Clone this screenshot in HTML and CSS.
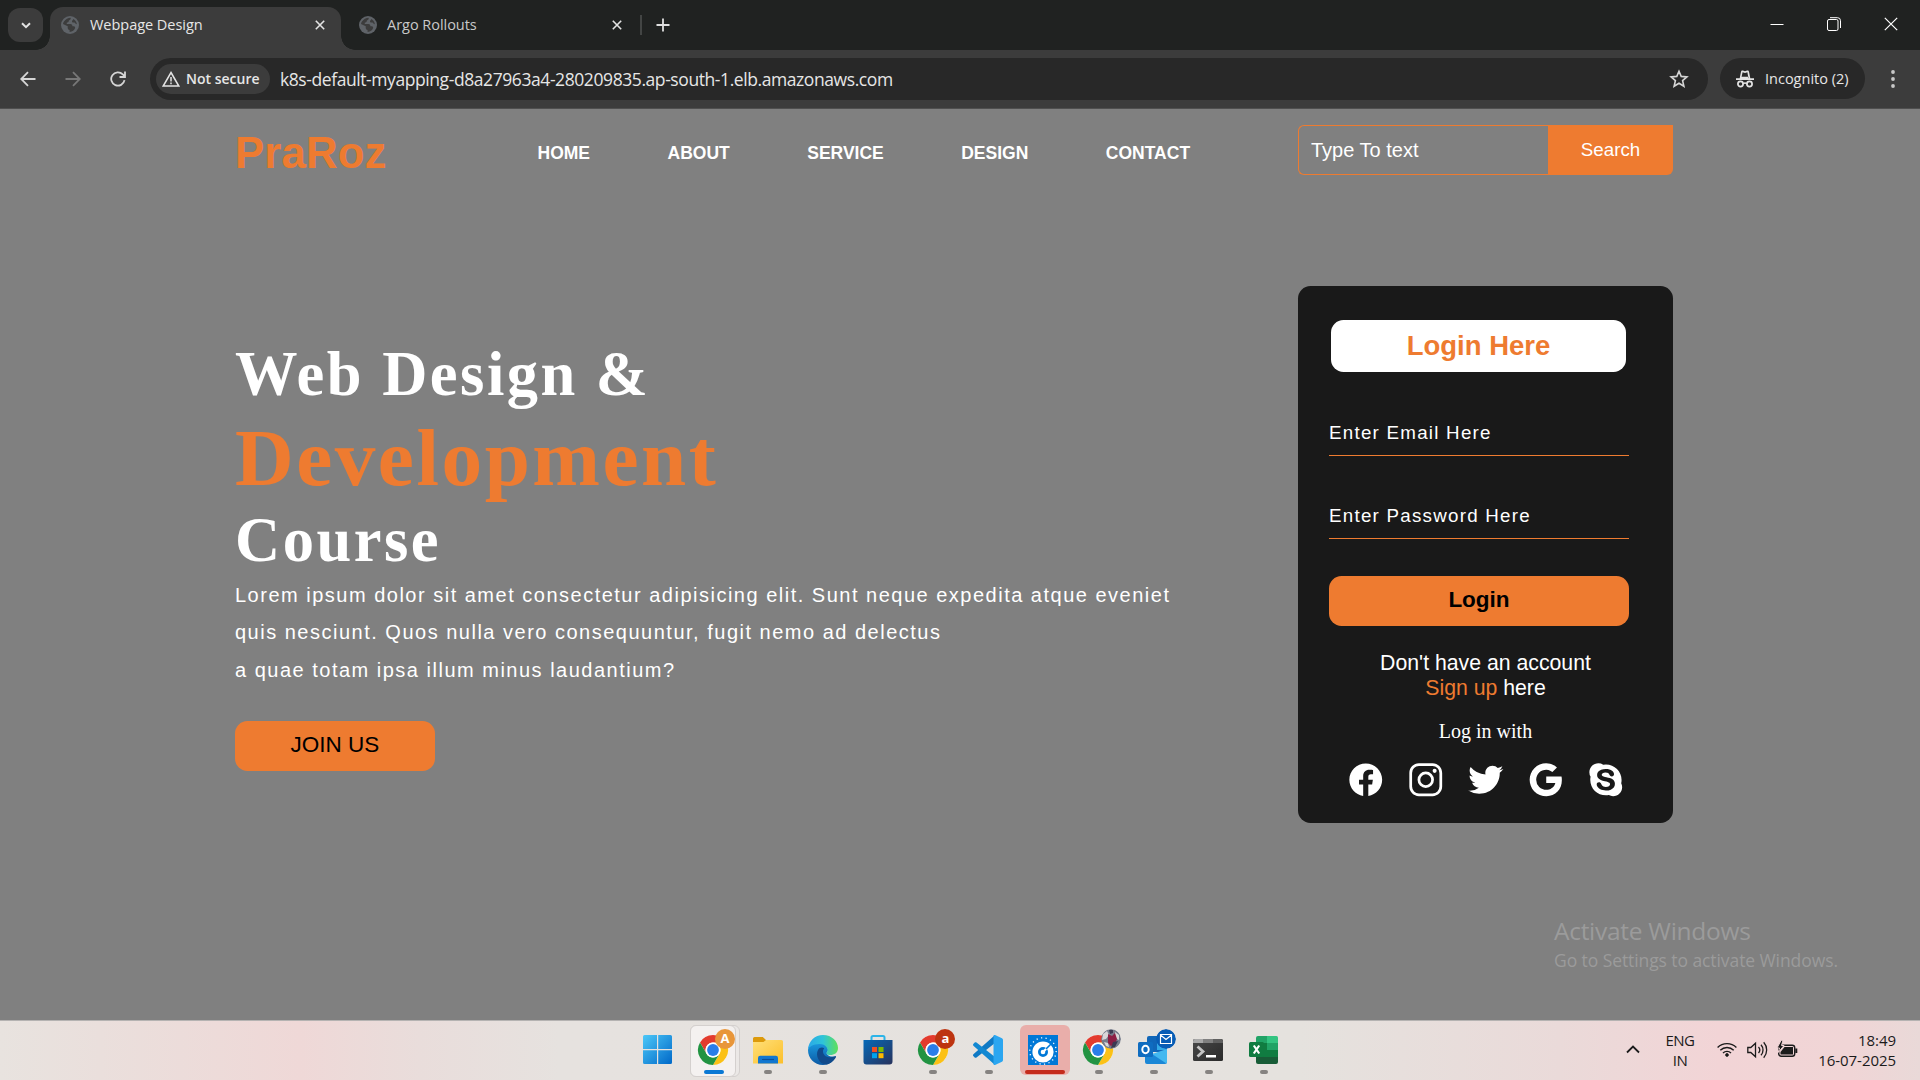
FILE: index.html
```html
<!DOCTYPE html>
<html lang="en">
<head>
<meta charset="utf-8">
<title>Webpage Design</title>
<link rel="stylesheet" href="styles.css">
</head>
<body>
<svg class="defs" width="0" height="0" aria-hidden="true">
  <defs>
    <linearGradient id="win" x1="0" y1="0" x2="1" y2="1"><stop offset="0" stop-color="#4cc8f8"/><stop offset="1" stop-color="#0068c8"/></linearGradient>
    <linearGradient id="fold" x1="0" y1="0" x2="1" y2="1"><stop offset="0" stop-color="#ffe07a"/><stop offset="1" stop-color="#fcbf2a"/></linearGradient>
    <linearGradient id="edgeA" x1="0" y1="0" x2="1" y2="0"><stop offset="0" stop-color="#2aa8e8"/><stop offset=".5" stop-color="#2fc4d8"/><stop offset="1" stop-color="#5fe05a"/></linearGradient>
    <linearGradient id="edgeB" x1="0" y1="0" x2="0" y2="1"><stop offset="0" stop-color="#1b9de2"/><stop offset="1" stop-color="#0c59a4"/></linearGradient>
    <linearGradient id="store" x1="0" y1="0" x2="1" y2="1"><stop offset="0" stop-color="#0669b8"/><stop offset="1" stop-color="#28325c"/></linearGradient>
    <linearGradient id="term" x1="0" y1="0" x2="1" y2="1"><stop offset="0" stop-color="#484848"/><stop offset="1" stop-color="#2a2a2a"/></linearGradient>
    <symbol id="globe" viewBox="0 0 18 18">
      <circle cx="9" cy="9" r="9" fill="#5f6368"/>
      <path class="land" d="M3 5.5C4.600 3 7 1.700 9.600 1.700c.5 1.500-.6 2.300-1.700 2.800C7.800 5.900 7 6.500 5.900 6.500L5.700 8.100H9.500c1.400 0 1.900 1 1.900 2.100h1.500c.9 0 1.300.8 1.200 1.700-.7 2-2.600 3.800-5.500 4.100v-2.100c-1.300-.1-1.900-.9-1.900-2.100v-1.500L2 7.900c.1-.9.500-1.700 1-2.400zM12 3c2 .9 3.600 2.900 3.900 5.200-1.300-.1-1.800-.9-2.300-1.700h-2c-.7-.5-.8-1.500-.3-2 .5-.5.900-.8.700-1.500z"/>
    </symbol>
    <symbol id="close" viewBox="0 0 10 10"><path d="M.8.8l8.400 8.400M9.200.8L.8 9.200" fill="none" stroke="currentColor" stroke-width="1.600"/></symbol>
    <symbol id="chrome" viewBox="0 0 32 32">
      <circle cx="16" cy="16" r="15" fill="#fff"/>
      <path fill="#e33b2e" d="M3 8.500A15 15 0 0 1 29 8.500H16a7.500 7.500 0 0 0-6.500 11.200z"/>
      <path fill="#fbc116" d="M29 8.500A15 15 0 0 1 16 31l6.500-11.250A7.500 7.500 0 0 0 16 8.500z"/>
      <path fill="#229342" d="M16 31A15 15 0 0 1 3 8.500l6.500 11.250a7.500 7.500 0 0 0 13 0z"/>
      <circle cx="16" cy="16" r="7.500" fill="#fff"/>
      <circle cx="16" cy="16" r="5.900" fill="#2a7de9"/>
    </symbol>
  </defs>
</svg>

<div class="tabstrip">
  <div class="tabsearch"><svg width="10" height="7" viewBox="0 0 10 7"><path d="M1 1.200l4 4 4-4" fill="none" stroke="#e3e3e3" stroke-width="2"/></svg></div>
  <div class="tab tab-active">
    <svg class="globe" width="18" height="18"><use href="#globe"/></svg>
    <span class="tab-title">Webpage Design</span>
    <svg class="x" width="10" height="10"><use href="#close"/></svg>
  </div>
  <div class="tab tab-idle">
    <svg class="globe" width="18" height="18"><use href="#globe"/></svg>
    <span class="tab-title">Argo Rollouts</span>
    <svg class="x" width="10" height="10"><use href="#close"/></svg>
  </div>
  <div class="tab-sep"></div>
  <svg class="newtab" width="14" height="14" viewBox="0 0 14 14"><path d="M7 .5v13M.5 7h13" stroke="#dfdfdf" stroke-width="1.800"/></svg>
  <div class="winctl">
    <svg width="14" height="14" viewBox="0 0 14 14"><path d="M.5 7.500h13" stroke="#fff" stroke-width="1"/></svg>
    <svg width="14" height="14" viewBox="0 0 14 14" fill="none" stroke="#fff"><rect x=".5" y="2.500" width="10.500" height="11" rx="1.500"/><path d="M3 .7h7.500a3 3 0 0 1 3 3V11"/></svg>
    <svg width="14" height="14" viewBox="0 0 14 14"><path d="M.8.800l12.400 12.400M13.200.800L.8 13.200" stroke="#fff" stroke-width="1.200"/></svg>
  </div>
</div>

<div class="toolbar">
  <svg class="nav-ico" width="16" height="16" viewBox="0 0 16 16"><path d="M15.500 8H1.500M8 1.200L1.200 8 8 14.800" fill="none" stroke="#d5d5d5" stroke-width="1.800"/></svg>
  <svg class="nav-ico" width="16" height="16" viewBox="0 0 16 16"><path d="M.5 8h14M8 1.200L14.800 8 8 14.800" fill="none" stroke="#777" stroke-width="1.800"/></svg>
  <svg class="nav-ico" width="16" height="16" viewBox="0 0 16 16"><path d="M14.500 9.200A6.700 6.700 0 1 1 12.800 3.400L14.500 5.200M15 .5V6H9.500" fill="none" stroke="#d5d5d5" stroke-width="1.800"/></svg>
  <div class="omnibox">
    <div class="chip">
      <svg width="18" height="16" viewBox="0 0 18 16"><path d="M9 1.500L16.800 15H1.200z" fill="none" stroke="#e3e3e3" stroke-width="1.500"/><path d="M9 6v4.500M9 11.500v1.700" stroke="#e3e3e3" stroke-width="1.500"/></svg>
      <span>Not secure</span>
    </div>
    <span class="url">k8s-default-myapping-d8a27963a4-280209835.ap-south-1.elb.amazonaws.com</span>
    <svg class="star" width="20" height="20" viewBox="0 0 20 20"><path d="M10 2.200l2.200 5.200 5.700.5-4.300 3.700 1.300 5.600L10 14.200l-4.900 3 1.300-5.600L2.100 7.900l5.700-.5z" fill="none" stroke="#d5d5d5" stroke-width="1.600"/></svg>
  </div>
  <div class="incognito">
    <svg width="18" height="18" viewBox="0 0 18 18"><path fill="#e3e3e3" fill-rule="evenodd" d="M0 8.200h18v1.700H0zM3.700 8.200L5 1.800C5.200.8 6 .3 6.900.6L9 1.200l2.100-.6c.9-.3 1.700.2 1.900 1.200l1.300 6.400h-1.900L11.400 2.300 9 3 6.600 2.300 5.600 6.800h7v1.400z"/><g fill="none" stroke="#e3e3e3" stroke-width="1.700"><circle cx="4.500" cy="14" r="2.600"/><circle cx="13.500" cy="14" r="2.600"/><path d="M7 13.500q2-1 4 0"/></g></svg>
    <span>Incognito (2)</span>
  </div>
  <svg class="kebab" width="4" height="18" viewBox="0 0 4 18" fill="#c8c8c8"><circle cx="2" cy="2" r="1.900"/><circle cx="2" cy="9" r="1.900"/><circle cx="2" cy="16" r="1.900"/></svg>
</div>

<main class="page">
  <header class="header">
    <div class="logo">PraRoz</div>
    <nav class="menu"><a>HOME</a><a>ABOUT</a><a>SERVICE</a><a>DESIGN</a><a>CONTACT</a></nav>
    <div class="search"><div class="search-input">Type To text</div><div class="search-btn">Search</div></div>
  </header>
  <section class="hero">
    <div class="copy">
      <h1><span class="line-a">Web Design &amp;</span><span class="line-b">Development</span><span class="line-c">Course</span></h1>
      <p class="par">Lorem ipsum dolor sit amet consectetur adipisicing elit. Sunt neque expedita atque eveniet<br>quis nesciunt. Quos nulla vero consequuntur, fugit nemo ad delectus<br>a quae totam ipsa illum minus laudantium?</p>
      <div class="join">JOIN US</div>
    </div>
    <div class="card">
      <h2>Login Here</h2>
      <div class="field">Enter Email Here</div>
      <div class="field field-next">Enter Password Here</div>
      <div class="login">Login</div>
      <p class="signup">Don't have an account<br><a>Sign up</a> here</p>
      <p class="with">Log in with</p>
      <div class="social">
        <svg viewBox="0 0 512 512"><path d="M480 257.350c0-123.700-100.300-224-224-224s-224 100.300-224 224c0 111.800 81.900 204.470 189 221.290V322.120h-56.890v-64.770H221V208c0-56.130 33.450-87.160 84.610-87.160 24.510 0 50.150 4.380 50.150 4.380v55.130H327.500c-27.810 0-36.510 17.260-36.510 35v42h62.120l-9.920 64.770H291v156.540c107.100-16.810 189-109.480 189-221.310z"/></svg>
        <svg viewBox="0 0 512 512"><path d="M349.330 69.330a93.620 93.620 0 0 1 93.340 93.340v186.660a93.620 93.620 0 0 1-93.340 93.340H162.670a93.620 93.620 0 0 1-93.340-93.340V162.670a93.620 93.620 0 0 1 93.340-93.340h186.660m0-37.330H162.670C90.800 32 32 90.800 32 162.670v186.660C32 421.200 90.800 480 162.670 480h186.660C421.200 480 480 421.200 480 349.330V162.670C480 90.800 421.200 32 349.330 32z"/><path d="M377.330 162.670a28 28 0 1 1 28-28 27.940 27.940 0 0 1-28 28zM256 181.330A74.670 74.670 0 1 1 181.330 256 74.750 74.750 0 0 1 256 181.330m0-37.330a112 112 0 1 0 112 112 112 112 0 0 0-112-112z"/></svg>
        <svg viewBox="0 0 512 512"><path d="M496 109.500a201.800 201.800 0 0 1-56.550 15.300 97.510 97.510 0 0 0 43.330-53.600 197.740 197.740 0 0 1-62.560 23.500A99.140 99.140 0 0 0 348.310 64c-54.420 0-98.460 43.400-98.460 96.900a93.210 93.210 0 0 0 2.540 22.100 280.700 280.700 0 0 1-203-101.300A95.690 95.690 0 0 0 36 130.400c0 33.600 17.530 63.300 44 80.700A97.500 97.500 0 0 1 35.220 199v1.200c0 47 34 86.100 79 95a100.760 100.760 0 0 1-25.940 3.400 94.380 94.380 0 0 1-18.510-1.800c12.510 38.500 48.920 66.500 92.050 67.300A199.590 199.590 0 0 1 39.500 405.600a203 203 0 0 1-23.500-1.400A278.680 278.680 0 0 0 166.740 448c181.360 0 280.440-147.700 280.440-275.800 0-4.200-.11-8.400-.31-12.500A198.480 198.480 0 0 0 496 109.500z"/></svg>
        <svg viewBox="0 0 512 512"><path d="M473.160 221.480l-2.260-9.590H262.460v88.220H387c-12.930 61.400-72.930 93.720-121.940 93.720-35.660 0-73.250-15-98.130-39.110a140.080 140.080 0 0 1-41.800-98.880c0-37.160 16.700-74.330 41-98.780s61-38.130 97.490-38.130c41.790 0 71.740 22.190 82.940 32.310l62.690-62.360C390.860 72.720 340.340 32 261.600 32c-60.750 0-119 23.270-161.080 65.710C58 139.500 36.250 199.930 36.250 256s20.580 113.480 61.300 155.600c43.510 44.920 105.130 68.400 168.580 68.400 57.730 0 112.450-22.620 151.450-63.660 38.340-40.400 58.170-96.300 58.170-154.900 0-24.670-2.480-39.320-2.590-39.960z"/></svg>
        <svg viewBox="0 0 512 512"><path fill-rule="evenodd" d="M467.160 303.600a205.690 205.690 0 0 0 4.900-45.150c0-116.320-95.690-210.700-213.790-210.700a221.460 221.460 0 0 0-36.540 3A123.580 123.580 0 0 0 155.930 32C87.550 32 32 86.720 32 154.150A119.560 119.560 0 0 0 49 216a211.160 211.160 0 0 0-4.320 42.350c0 116.440 95.690 210.700 213.670 210.700a214 214 0 0 0 39.090-3.500A125.450 125.450 0 0 0 356.070 480C424.570 480 480 425.280 480 357.970a118.470 118.470 0 0 0-12.840-54.370zM368 359c-9.920 13.760-24.510 24.730-43.410 32.430S283.360 403 257.690 403c-30.690 0-56.360-5.370-76.550-15.870a101 101 0 0 1-35.240-30.800c-9.110-12.830-13.660-25.660-13.660-38 0-7.700 3-14.350 8.870-19.950 5.840-5.370 13.420-8.170 22.290-8.170 7.350 0 13.650 2.100 18.790 6.420 4.900 4.080 9.100 10.150 12.480 18.080A108.090 108.090 0 0 0 207 336.150q6.320 8.220 17.860 13.650c7.820 3.620 18.200 5.480 31 5.480 17.620 0 32.090-3.730 42.940-11.080 10.740-7.120 15.880-15.750 15.880-26.250 0-8.280-2.690-14.820-8.290-19.950-5.830-5.370-13.420-9.570-22.870-12.370-9.690-3-22.870-6.180-39.210-9.560-22.170-4.670-41-10.270-56-16.570-15.280-6.420-27.650-15.400-36.760-26.480-9.220-11.320-13.770-25.550-13.770-42.240a67.860 67.860 0 0 1 14.470-42.580c9.570-12.250 23.460-21.820 41.550-28.350 17.740-6.530 38.860-9.800 62.660-9.800 19.140 0 35.830 2.220 49.830 6.420s25.910 10.150 35.360 17.380 16.340 14.930 20.770 23 6.650 16.220 6.650 24c0 7.460-2.920 14.350-8.760 20.300a29.650 29.650 0 0 1-21.940 9.100c-7.930 0-14.120-1.870-18.430-5.600-4-3.500-8.170-8.870-12.720-16.690-5.370-9.910-11.790-17.730-19.140-23.100-7.240-5.140-19.260-7.940-36.060-7.940-15.520 0-28.120 3-37.460 8.980-9 5.720-13.420 12.370-13.420 20.180a18.440 18.440 0 0 0 4.090 12.130 37.900 37.900 0 0 0 12.370 9.450 90.400 90.400 0 0 0 17.150 6.530c6 1.640 15.870 4.090 29.530 7.120 17.380 3.620 33.250 7.820 47.260 12.130 14.240 4.550 26.490 10 36.520 16.450a72.930 72.930 0 0 1 24.160 25.090c5.720 10 8.640 22.510 8.640 37.090A75.090 75.090 0 0 1 368 359z"/></svg>
      </div>
    </div>
  </section>
  <div class="activate"><div class="act-a">Activate Windows</div><div class="act-b">Go to Settings to activate Windows.</div></div>
</main>

<footer class="taskbar">
  <div class="apps">
    <div class="app"><svg width="30" height="30" viewBox="0 0 30 30" fill="url(#win)"><path d="M0 1.500A1.500 1.500 0 0 1 1.500 0H14v14H0zM15.200 0h12.300A1.500 1.500 0 0 1 29 1.500V14H15.200zM0 15.200h14V29H1.500A1.500 1.500 0 0 1 0 27.500zM15.200 15.200H29v12.300a1.500 1.500 0 0 1-1.500 1.500H15.200z"/></svg></div>
    <div class="app app-open"><svg width="32" height="32"><use href="#chrome"/></svg><b class="badge badge-a">A</b><i class="run run-wide"></i></div>
    <div class="app"><svg width="30" height="30" viewBox="0 0 30 30"><path fill="#dc9a0c" d="M0 3.500A1.500 1.500 0 0 1 1.500 2h8.300L13 5v4H0z"/><path fill="url(#fold)" d="M0 7h10.500l2.500-2h15.500A1.500 1.500 0 0 1 30 6.500V28.500H0z"/><path fill="#1277d0" d="M5 28.500V23a2.200 2.200 0 0 1 2.200-2.200h15.600A2.200 2.200 0 0 1 25 23v5.500z"/><path d="M9 24.500h12" stroke="#0a4f9a" stroke-width="1.200"/></svg><i class="run"></i></div>
    <div class="app"><svg width="30" height="30" viewBox="0 0 30 30"><path fill="url(#edgeB)" d="M0 15C1 7 8 6 12 7c5 1 8 4 8 8 0 2-2 2-1 4 2 3 6 3 9 2-2 5-7 9-13 9C6 30 0 23 0 15z"/><path fill="url(#edgeA)" d="M0 14.500C.5 6 7 0 15 0c9 0 15 6.500 15 13 0 5-4 7-7.500 7-4 0-4.500-1.500-3.500-3 2-3-1-8-7.500-8C5 9 1 12 0 14.500z"/><path fill="#114a8b" d="M10 15c-3 5 1 15 9 14.500 4-1 7.500-4.500 9-7.500.3-.7-.2-1-.8-.7-5 2.200-12 1-12.200-4.800 0-1.500.5-2.500 1.200-3.300C14 12 11.500 12.500 10 15z"/></svg><i class="run"></i></div>
    <div class="app"><svg width="30" height="32" viewBox="0 0 30 32"><path d="M8.500 7V3.500A1.500 1.500 0 0 1 10 2h10a1.500 1.500 0 0 1 1.500 1.500V7" fill="none" stroke="#2cb4e8" stroke-width="2"/><path fill="url(#store)" d="M.5 6h29v21.500a3 3 0 0 1-3 3h-23a3 3 0 0 1-3-3z"/><path fill="#f25022" d="M9 13h5v5H9z"/><path fill="#7fba00" d="M15.500 13h5v5h-5z"/><path fill="#00a4ef" d="M9 19.200h5v5H9z"/><path fill="#ffb900" d="M15.500 19.200h5v5h-5z"/></svg></div>
    <div class="app"><svg width="32" height="32"><use href="#chrome"/></svg><b class="badge badge-r">a</b><i class="run"></i></div>
    <div class="app"><svg width="30" height="30" viewBox="0 0 30 30"><path fill="#0f79c4" d="M22 0v8L3.500 22.500c-.6.500-1.300.4-1.800-.1l-1.400-1.400c-.4-.5-.4-1.200.1-1.700z"/><path fill="#1288d2" d="M22 30v-8L3.500 7.500c-.6-.5-1.300-.4-1.800.1L.3 9c-.4.500-.4 1.200.1 1.700z"/><path fill="#2ba6f0" d="M22 0l7 3.300c.6.300 1 .9 1 1.600v20.200c0 .7-.4 1.300-1 1.600L22 30c-.8.200-1.500-.2-1.500-1V1c0-.8.700-1.200 1.500-1z"/></svg><i class="run"></i></div>
    <div class="app app-alert"><svg width="30" height="30" viewBox="0 0 30 30"><path fill="#0078d7" d="M0 0h30v30H0z"/><circle cx="15" cy="16" r="13.200" fill="none" stroke="#fff" stroke-width="1.300" stroke-dasharray="1.200 3.400"/><circle cx="15" cy="17" r="7.800" fill="none" stroke="#fff" stroke-width="5.600"/><circle cx="15" cy="17" r="2.300" fill="#fff"/><path d="M15 17L20 12" stroke="#fff" stroke-width="2.200"/><path d="M18 14L24.500 7.500" stroke="#0078d7" stroke-width="1.600"/></svg><i class="run run-red"></i></div>
    <div class="app"><svg width="32" height="32"><use href="#chrome"/></svg><svg class="badge" viewBox="0 0 20 20"><circle cx="10" cy="10" r="10" fill="#777d8c"/><path fill="#d9d6d8" d="M2 5l4-3 2 4-3 4-4 1zM14 3l4 3v5l-4-2zM3 13l4 1 1 4-3-1z"/><path fill="#8c1f45" d="M7 5l4 2 3-3 2 6-2 5-4 2-3-3z"/><path fill="#3b3a52" d="M12 13l5-1-3 6-4 1zM8 1h4v3l-3 1z"/></svg><i class="run"></i></div>
    <div class="app"><svg width="30" height="30" viewBox="0 0 30 30"><path fill="#1066b8" d="M9 3a2 2 0 0 1 2-2h16a2 2 0 0 1 2 2v14H9z"/><path fill="#32a9e7" d="M19 5h10v10H19z"/><path fill="#1b87d6" d="M7 15l11 5 11-6v13a2 2 0 0 1-2 2H9a2 2 0 0 1-2-2z"/><path fill="#43b8f0" d="M29 14v13a2 2 0 0 1-.6 1.400L14 19z"/><rect y="7" width="15" height="15" rx="1.500" fill="#0f6cc0"/><ellipse cx="7.500" cy="14.500" rx="3.200" ry="3.800" fill="none" stroke="#fff" stroke-width="2"/></svg><svg class="badge" viewBox="0 0 20 20"><circle cx="10" cy="10" r="10" fill="#075cb5"/><path d="M4.500 5.500h11v9h-11zM4.500 6l5.500 4.500L15.500 6" fill="none" stroke="#fff" stroke-width="1.200"/></svg><i class="run"></i></div>
    <div class="app"><svg width="30" height="22" viewBox="0 0 30 22"><rect width="30" height="22" rx="1.500" fill="url(#term)"/><path fill="#a8a8a8" d="M1.500 0H10v4H0V1.500z"/><path fill="#808080" d="M10 0h10v4H10z"/><path fill="#606060" d="M20 0h8.500L30 1.500V4H20z"/><path d="M4.500 7.500l5.500 5-5.500 5" fill="none" stroke="#c4c4c4" stroke-width="2.800"/><path fill="#fff" d="M13 16h10v2.500H13z"/></svg><i class="run"></i></div>
    <div class="app"><svg width="30" height="30" viewBox="0 0 30 30"><path fill="#21a366" d="M7 3a2 2 0 0 1 2-2h9v7H7z"/><path fill="#33c481" d="M18 1h9.500A1.500 1.500 0 0 1 29 2.500V8H18z"/><path fill="#107c41" d="M7 8h11v14H7zM18 15h11v7H18z"/><path fill="#21a366" d="M18 8h11v7H18z"/><path fill="#185c37" d="M7 22h22v5a2 2 0 0 1-2 2H9a2 2 0 0 1-2-2z"/><rect y="7" width="15" height="15" rx="1.500" fill="#107c41"/><path d="M4.800 10.500l5.400 8M10.200 10.500l-5.400 8" stroke="#fff" stroke-width="2.200"/></svg><i class="run"></i></div>
  </div>
  <div class="tray">
    <svg width="14" height="9" viewBox="0 0 14 9"><path d="M1 7.500L7 1.500l6 6" fill="none" stroke="#1b1b1b" stroke-width="1.800"/></svg>
    <div class="lang">ENG<br>IN</div>
    <svg class="wifi" width="20" height="15" viewBox="0 0 20 15" fill="none" stroke="#1b1b1b" stroke-width="1.400"><path d="M.6 5.500a13.300 13.300 0 0 1 18.800 0M3.300 8.300a9.500 9.500 0 0 1 13.400 0M6 11a5.700 5.700 0 0 1 8 0"/><circle cx="10" cy="13" r="1.400" fill="#1b1b1b" stroke-width=".8"/></svg>
    <svg class="vol" width="21" height="18" viewBox="0 0 21 18" fill="none" stroke="#1b1b1b" stroke-width="1.300"><path d="M.8 6.500h3L8.500 2.200v13.600L3.800 11.500h-3z"/><path d="M11.500 6a4.500 4.500 0 0 1 0 6M14 3.700a8 8 0 0 1 0 10.600M16.700 1.300a11.500 11.500 0 0 1 0 15.400"/></svg>
    <svg class="bat" width="21" height="18" viewBox="0 0 21 18"><rect x="1.700" y="5.200" width="16" height="11" rx="2.500" fill="none" stroke="#1b1b1b" stroke-width="1.400"/><path d="M19.300 8.500v4.500" stroke="#1b1b1b" stroke-width="2"/><path fill="#1b1b1b" d="M7.500 7H16v7.500H3.500V12z"/><path fill="#1b1b1b" stroke="#f1d4d6" stroke-width="1" d="M4.200.3L0 8h2.500L1.200 12.500 7 5.500H4.500L6 .3z"/></svg>
    <div class="clock">18:49<br>16-07-2025</div>
  </div>
</footer>
</body>
</html>
```
FILE: styles.css
```css
* { box-sizing: border-box; margin: 0; padding: 0; }
body {
  width: 1920px;
  height: 1080px;
  overflow: hidden;
  display: flex;
  flex-direction: column;
  background: #808080;
  font-family: "Liberation Sans", Arial, sans-serif;
}
svg { display: block; flex: none; }
.defs { position: absolute; }

/* browser window */
.tabstrip, .toolbar, .activate, .taskbar { font-family: "Open Sans", "Noto Sans", sans-serif; }
.tabstrip {
  height: 50px;
  flex: none;
  display: flex;
  background: #202221;
  padding-left: 8px;
}
.tabsearch {
  width: 35px;
  height: 34px;
  margin: 8px 7px 0 0;
  border-radius: 12px;
  background: #3c3c3c;
  display: flex;
  align-items: center;
  justify-content: center;
}
.tab {
  height: 43px;
  margin-top: 7px;
  display: flex;
  align-items: center;
  color: #e6e6e6;
  font-size: 14.5px;
  letter-spacing: -0.03px;
  position: relative;
  white-space: nowrap;
  padding-bottom: 7px;
}
.tab .globe { margin-top: -1px; }
.tab .x { margin-left: auto; margin-top: 0; color: #e3e3e3; }
.tab-title { margin-left: 11px; line-height: 20px; }
.tab-active {
  width: 291px;
  background: #3c3c3c;
  border-radius: 13px 13px 0 0;
  padding: 0 16px 7px 11px;
}
.land { fill: #3c3c3c; }
.tab-active::before, .tab-active::after {
  content: "";
  position: absolute;
  bottom: 0;
  width: 14px;
  height: 14px;
}
.tab-active::before { left: -14px; background: radial-gradient(circle at 0 0, transparent 13.5px, #3c3c3c 14px); }
.tab-active::after { right: -14px; background: radial-gradient(circle at 100% 0, transparent 13.5px, #3c3c3c 14px); }
.tab-idle { width: 299px; padding: 0 18px 7px 18px; color: #c9c9c9; }
.tab-idle .tab-title { margin-left: 10px; }
.tab-sep { width: 2px; height: 20px; margin-top: 15px; background: #434544; }
.newtab { margin: 18px 0 0 14px; }
.winctl { margin: 17px 22px 0 auto; display: flex; gap: 43px; }

.toolbar {
  height: 59px;
  flex: none;
  display: flex;
  align-items: flex-start;
  background: linear-gradient(#3c3c3c 0 0) 0 0 / 100% 58px no-repeat, #4f4f4f;
  padding: 8px 25px 0 20px;
}
.nav-ico { margin: 13px 29px 0 0; }
.omnibox {
  width: 1558px;
  height: 42px;
  margin-left: -5px;
  border-radius: 21px;
  background: #282828;
  display: flex;
  align-items: center;
  padding: 0 19px 0 6px;
}
.chip {
  width: 114px;
  height: 30px;
  border-radius: 15px;
  background: #3c3c3c;
  display: flex;
  align-items: center;
  gap: 6px;
  padding-left: 6px;
  color: #e6e6e6;
  font-size: 14px;
  font-weight: 600;
  letter-spacing: 0;
  white-space: nowrap;
}
.chip span { margin-top: -2px; }
.url { margin-left: 10px; font-size: 17.5px; letter-spacing: -0.42px; color: #e6e6e6; }
.star { margin-left: auto; }
.incognito {
  width: 145px;
  height: 41px;
  margin-left: 12px;
  border-radius: 21px;
  background: #282828;
  display: flex;
  align-items: center;
  padding-left: 16px;
  gap: 11px;
  color: #e6e6e6;
  font-size: 14.5px;
  letter-spacing: 0;
  white-space: nowrap;
}
.kebab { margin: 12px 0 0 auto; }

/* web page */
.page { flex: none; height: 911px; position: relative; }
.header { display: flex; align-items: flex-start; height: 91px; padding-left: 235px; }
.logo {
  width: 302.500px;
  margin-top: 14px;
  font-size: 43.75px;
  letter-spacing: 0.15px;
  line-height: 60px;
  font-weight: bold;
  color: #ee7b30;
}
.menu {
  width: 760.500px;
  margin-top: 34px;
  display: flex;
  gap: 77.5px;
  font-size: 17.5px;
  line-height: 20px;
  font-weight: bold;
  color: #fff;
}
.search { margin-top: 16px; display: flex; color: #fff; }
.search-input {
  width: 250px;
  height: 50px;
  border: 1px solid #ee7b30;
  border-right: 0;
  border-radius: 6px 0 0 6px;
  padding-left: 12px;
  font-size: 20px;
  line-height: 48px;
}
.search-btn {
  width: 125px;
  height: 50px;
  background: #ee7b30;
  border-radius: 0 0 6px 0;
  font-size: 18.75px;
  line-height: 50px;
  text-align: center;
}
.hero { display: flex; align-items: flex-start; padding-left: 235px; }
.copy { width: 1063px; margin-top: 133px; color: #fff; }
h1 { font: bold 62.5px "Liberation Serif", "Times New Roman", serif; letter-spacing: 2.5px; }
h1 span { display: block; }
.line-a { line-height: 83px; }
.line-b { line-height: 84px; margin-bottom: 3.5px; font-size: 81.25px; color: #ee7b30; }
.line-c { line-height: 73px; }
.par { font-size: 20px; line-height: 37.5px; letter-spacing: 1.5px; white-space: nowrap; }
.join {
  width: 200px;
  height: 50px;
  margin-top: 32px;
  border-radius: 12.5px;
  background: #ee7b30;
  color: #000;
  font-size: 22.5px;
  line-height: 48px;
  text-align: center;
}
.card {
  width: 375px;
  height: 537px;
  margin-top: 86px;
  border-radius: 12.5px;
  background: #191919;
  padding-top: 34px;
  color: #fff;
}
.card h2 {
  width: 295px;
  height: 52px;
  margin-left: 33px;
  border-radius: 12.5px;
  background: #fff;
  color: #ee7b30;
  font-size: 27.5px;
  line-height: 52px;
  text-align: center;
}
.field {
  width: 300px;
  height: 45px;
  margin: 39px 0 0 31px;
  border-bottom: 1px solid #ee7b30;
  font-size: 18.75px;
  line-height: 44px;
  letter-spacing: 1.25px;
}
.field-next { margin-top: 38px; }
.login {
  width: 300px;
  height: 50px;
  margin: 37px 0 0 31px;
  border-radius: 12.5px;
  background: #ee7b30;
  color: #000;
  font-size: 22.5px;
  line-height: 48px;
  font-weight: bold;
  text-align: center;
}
.signup { margin-top: 25px; font-size: 21.25px; line-height: 25px; text-align: center; }
.signup a { color: #ee7b30; }
.with { margin-top: 19px; font: 20px/23px "Liberation Serif", "Times New Roman", serif; text-align: center; }
.social { margin-top: 18px; display: flex; justify-content: center; gap: 22.5px; }
.social svg { width: 37.5px; height: 37.5px; fill: #fff; }
.activate { position: absolute; left: 1554px; top: 804px; color: #9b9b9b; white-space: nowrap; }
.act-a { font-size: 24.5px; line-height: 36px; letter-spacing: -0.28px; }
.act-b { font-size: 17.5px; line-height: 22px; letter-spacing: -0.08px; }

/* desktop taskbar */
.taskbar {
  height: 60px;
  flex: none;
  display: flex;
  border-top: 1px solid #b5b3b2;
  background: linear-gradient(90deg, #e8e3df 0, #eadfdc 100px, #efd8d7 300px, #e9dddb 420px, #e6e2df 560px, #e5e2de 1300px, #eadad9 1560px, #f2d4d6 1720px, #f0d5d6 1850px, #e9d9d8 1920px);
}
.apps { display: flex; margin-left: 630px; }
.app {
  width: 55.1px;
  height: 57px;
  position: relative;
  display: flex;
  align-items: center;
  justify-content: center;
}
.app > svg, .app b { z-index: 1; }
.app-open::before, .app-open::after {
  content: "";
  position: absolute;
  left: 5px;
  top: 4px;
  width: 48px;
  height: 50px;
  border: 1px solid #d4d0ce;
  border-radius: 6px;
  background: #ebe8e6;
}
.app-open::after { width: 44px; background: #f4f1f0; }
.app-alert::before {
  content: "";
  position: absolute;
  left: 4px;
  top: 4px;
  width: 50px;
  height: 50px;
  border-radius: 6px;
  background: #e9aeaa;
}
.app .badge {
  position: absolute;
  left: 30px;
  top: 8px;
  width: 20px;
  height: 20px;
  border-radius: 50%;
  color: #fff;
  font-size: 13px;
  line-height: 19px;
  text-align: center;
  z-index: 2;
}
.badge-a { background: #e8963a; }
.badge-r { background: #bd3410; }
.run {
  position: absolute;
  left: 24px;
  bottom: 4px;
  width: 8px;
  height: 4px;
  border-radius: 2px;
  background: #868381;
  z-index: 2;
}
.run-wide { left: 19px; width: 20px; background: #0a78d4; }
.run-red { left: 9px; width: 40px; background: #c42b1c; }
.tray { margin-left: auto; width: 294px; height: 57px; display: flex; align-items: center; color: #1b1b1b; font-size: 15px; line-height: 20px; }
.lang { width: 40px; margin: 0 0 0 20px; text-align: center; letter-spacing: -0.5px; }
.wifi { margin-left: 17px; }
.vol { margin-left: 10px; }
.bat { margin: -2px 0 0 9px; }
.clock { margin: 0 24px 0 auto; text-align: right; letter-spacing: -0.05px; white-space: nowrap; }
```
